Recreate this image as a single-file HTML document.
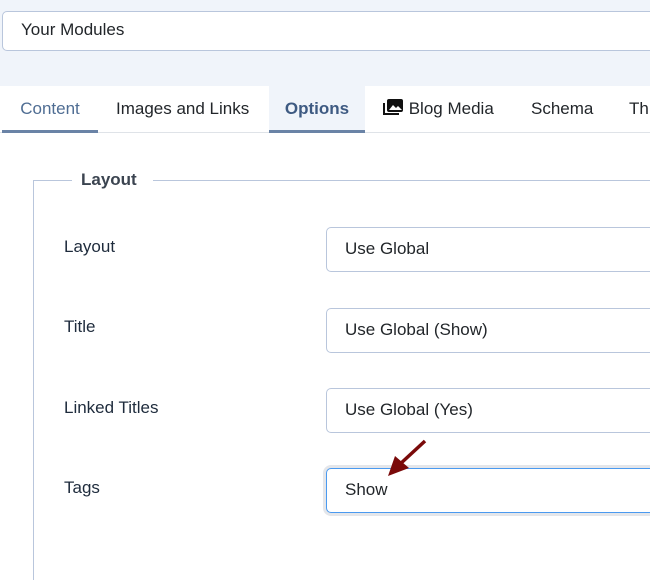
<!DOCTYPE html>
<html><head><style>
*{box-sizing:border-box;margin:0;padding:0}
body{width:650px;height:521px;overflow:hidden;background:#fff;font-family:"Liberation Sans",sans-serif;color:#22262a;position:relative}
.top{position:absolute;left:0;top:0;width:650px;height:86px;background:#f0f4fa}
.inp{position:absolute;left:2px;top:11px;width:660px;height:40px;background:#fff;border:1px solid #b9c6dc;border-radius:5px;font-size:17px;padding:8px 0 0 18px}
.tabs{position:absolute;left:0;top:86px;width:650px;height:47px;border-bottom:1px solid #dfe3e8;font-size:17px}
.tab{position:absolute;top:0;height:47px;padding-top:13px}
.lf{position:absolute;left:33px;top:180px;width:640px;height:400px;border-left:1px solid #b9c6dc;border-top:1px solid #b9c6dc}
.leg{position:absolute;left:72px;top:170px;background:#fff;padding:0 16px 0 9px;font-size:17px;font-weight:bold;color:#3b4450}
.lab{position:absolute;left:64px;font-size:17px;color:#1e2b3c}
.sel{position:absolute;left:326px;width:340px;height:45px;border:1px solid #b9c6dc;border-radius:5px;font-size:17px;padding:11px 0 0 18px;background:#fff}
</style></head><body>
<div class="top"></div>
<div class="inp">Your Modules</div>
<div class="tabs">
<div class="tab" style="left:2px;width:96px;border-bottom:3px solid #6a83a6;color:#4f6d93;text-align:center">Content</div>
<div class="tab" style="left:116px">Images and Links</div>
<div class="tab" style="left:269px;width:96px;background:#f0f4fa;border-bottom:3px solid #6a83a6;color:#3e5a82;font-weight:bold;text-align:center">Options</div>
<div class="tab" style="left:383px"><svg width="21" height="17" viewBox="0 0 21 17" style="vertical-align:-2px"><rect x="4" y="0" width="16" height="13" rx="2" fill="#111"/><path d="M6 11l4-5 3 3 2-2 4 4z" fill="#fff"/><path d="M1 4v11h15" stroke="#111" stroke-width="2" fill="none"/></svg> Blog Media</div>
<div class="tab" style="left:531px">Schema</div>
<div class="tab" style="left:629px">Th</div>
</div>
<div class="lf"></div>
<div class="leg">Layout</div>
<div class="lab" style="top:237px">Layout</div>
<div class="sel" style="top:227px">Use Global</div>
<div class="lab" style="top:317px">Title</div>
<div class="sel" style="top:308px">Use Global (Show)</div>
<div class="lab" style="top:398px">Linked Titles</div>
<div class="sel" style="top:388px">Use Global (Yes)</div>
<div class="lab" style="top:478px">Tags</div>
<div class="sel" style="top:468px;border-color:#4a9af0;box-shadow:0 0 0 3px #e4e6ea">Show</div>
<svg style="position:absolute;left:385px;top:438px" width="45" height="42"><line x1="40" y1="3" x2="14" y2="27" stroke="#7a0a0a" stroke-width="3.5"/><path d="M3 38L10 18L24 30Z" fill="#7a0a0a"/></svg>
</body></html>
